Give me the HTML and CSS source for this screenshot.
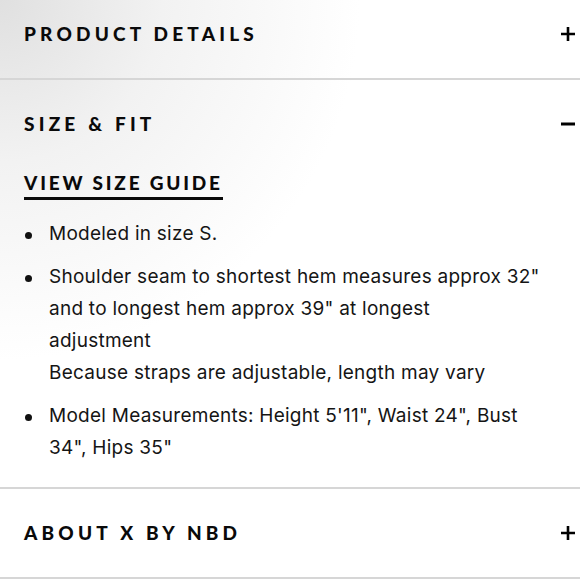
FILE: index.html
```html
<!DOCTYPE html>
<html lang="en">
<head>
<meta charset="utf-8">
<title>Size &amp; Fit</title>
<link rel="stylesheet" href="styles.css">
</head>
<body>
<div class="accordion">
  <section class="item item-first">
    <div class="head">
      <h2 class="title">PRODUCT DETAILS</h2>
      <svg class="icon" width="14" height="14" viewBox="0 0 14 14"><path d="M7 0v14M0 7h14" stroke="#000" stroke-width="2.6" fill="none"/></svg>
    </div>
  </section>
  <section class="item">
    <div class="head">
      <h2 class="title">SIZE &amp; FIT</h2>
      <svg class="icon" width="14" height="14" viewBox="0 0 14 14"><path d="M0 7h14" stroke="#000" stroke-width="3" fill="none"/></svg>
    </div>
    <div class="body">
      <a class="guide" href="#">VIEW SIZE GUIDE</a>
      <ul class="list">
        <li>Modeled in size S.</li>
        <li>Shoulder seam to shortest hem measures approx 32"<br>and to longest hem approx 39" at longest<br>adjustment<br>Because straps are adjustable, length may vary</li>
        <li>Model Measurements: Height 5'11", Waist 24", Bust<br>34", Hips 35"</li>
      </ul>
    </div>
  </section>
  <section class="item">
    <div class="head">
      <h2 class="title">ABOUT X BY NBD</h2>
      <svg class="icon" width="14" height="14" viewBox="0 0 14 14"><path d="M7 0v14M0 7h14" stroke="#000" stroke-width="2.6" fill="none"/></svg>
    </div>
  </section>
</div>
</body>
</html>
```
FILE: styles.css
```css
html, body {
  margin: 0;
  padding: 0;
}
body {
  background: radial-gradient(circle 360px at 0 0, #e0e0e0 0%, #f2f2f2 45%, #ffffff 100%);
  background-repeat: no-repeat;
  background-color: #fff;
  color: #111;
  font-family: "Inter", "Liberation Sans", sans-serif;
  height: 580px;
  overflow: hidden;
}
.accordion {
  padding: 0 5px 0 24px;
}
.item {
  border-bottom: 2px solid #d6d6d6;
  margin-left: -24px;
  margin-right: -5px;
  padding-left: 24px;
  padding-right: 5px;
}
.item-first {
  margin-top: -10px;
}
.head {
  height: 88px;
  display: flex;
  align-items: center;
  justify-content: space-between;
}
.title {
  margin: 0;
  font-family: "Lato", "Liberation Sans", sans-serif;
  font-weight: 900;
  font-size: 19px;
  letter-spacing: 4.2px;
  line-height: 24px;
  color: #0a0a0a;
}
.icon {
  display: block;
  flex: none;
}
.body {
  padding-top: 3px;
  padding-bottom: 23px;
}
.guide {
  display: inline-block;
  font-family: "Lato", "Liberation Sans", sans-serif;
  font-weight: 900;
  font-size: 19px;
  letter-spacing: 2.8px;
  line-height: 24px;
  color: #0a0a0a;
  text-decoration: none;
  padding-bottom: 2px;
  border-bottom: 3px solid #0a0a0a;
}
.list {
  list-style: none;
  margin: 18px 0 0;
  padding: 0;
}
.list li {
  display: grid;
  grid-template-columns: 25px 1fr;
  font-size: 19px;
  letter-spacing: 0.25px;
  line-height: 32px;
  color: #151515;
  margin-bottom: 11px;
  white-space: nowrap;
}
.list li::before {
  content: "";
  width: 7px;
  height: 7px;
  border-radius: 50%;
  background: #111;
  margin-top: 14px;
  margin-left: 1px;
}
.list li:last-child {
  margin-bottom: 0;
}
```
